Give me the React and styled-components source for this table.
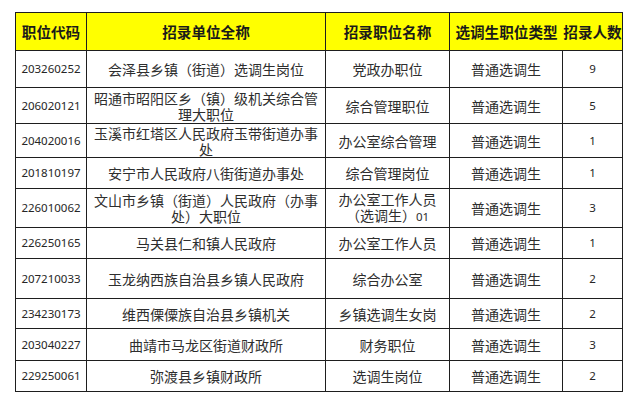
import React from "react";
import styled, { createGlobalStyle } from "styled-components";

const Global = createGlobalStyle`
  html, body { margin: 0; padding: 0; background: #ffffff; }
  body { font-family: "Noto Sans CJK SC", "Noto Sans", sans-serif; }
`;

const COLS = "71px 239px 124px 113px 60px";

const Page = styled.div`
  padding: 12px 0 0 15px;
  background: #fff;
  width: 640px;
  height: 401px;
  box-sizing: border-box;
  overflow: hidden;
`;

const Table = styled.div`
  display: flex;
  flex-direction: column;
  width: max-content;
  border-left: 1px solid #1e1e1e;
  border-top: 1px solid #1e1e1e;
`;

const Row = styled.div`
  display: grid;
  grid-template-columns: ${COLS};
  height: ${(p) => p.$h}px;
  background: ${(p) => (p.$head ? "#ffff00" : "#ffffff")};
`;

const Cell = styled.div`
  box-sizing: border-box;
  display: flex;
  align-items: center;
  justify-content: center;
  text-align: center;
  border-right: ${(p) => (p.$noRight ? "none" : "1px solid #1e1e1e")};
  border-bottom: 1px solid #1e1e1e;
  color: #2e2e2e;
  font-size: 14px;
  line-height: 16px;
  font-family: "Noto Sans CJK SC", sans-serif;
`;

const HeadCell = styled(Cell)`
  font-weight: 700;
  font-size: 14.6px;
  color: #1a1a1a;
  white-space: nowrap;
  padding-top: 1px;
  overflow: hidden;
`;

const CodeCell = styled(Cell)`
  font-family: "Noto Sans", "Noto Sans CJK SC", sans-serif;
  font-size: 11.5px;
  color: #262626;
`;

const NumCell = styled(CodeCell)``;

const Num = styled.span`
  font-family: "Noto Sans", sans-serif;
  font-size: 11.5px;
`;

const rows = [
  { h: 37, code: "203260252", unit: ["会泽县乡镇（街道）选调生岗位"], pos: ["党政办职位"], type: "普通选调生", n: "9" },
  { h: 36, code: "206020121", unit: ["昭通市昭阳区乡（镇）级机关综合管", "理大职位"], pos: ["综合管理职位"], type: "普通选调生", n: "5" },
  { h: 34, code: "204020016", unit: ["玉溪市红塔区人民政府玉带街道办事", "处"], pos: ["办公室综合管理"], type: "普通选调生", n: "1" },
  { h: 31, code: "201810197", unit: ["安宁市人民政府八街街道办事处"], pos: ["综合管理岗位"], type: "普通选调生", n: "1" },
  { h: 39, code: "226010062", unit: ["文山市乡镇（街道）人民政府（办事", "处）大职位"], pos: ["办公室工作人员", "（选调生）01"], type: "普通选调生", n: "3" },
  { h: 31, code: "226250165", unit: ["马关县仁和镇人民政府"], pos: ["办公室工作人员"], type: "普通选调生", n: "1" },
  { h: 40, code: "207210033", unit: ["玉龙纳西族自治县乡镇人民政府"], pos: ["综合办公室"], type: "普通选调生", n: "2" },
  { h: 30, code: "234230173", unit: ["维西傈僳族自治县乡镇机关"], pos: ["乡镇选调生女岗"], type: "普通选调生", n: "2" },
  { h: 32, code: "203040227", unit: ["曲靖市马龙区街道财政所"], pos: ["财务职位"], type: "普通选调生", n: "3" },
  { h: 31, code: "229250061", unit: ["弥渡县乡镇财政所"], pos: ["选调生岗位"], type: "普通选调生", n: "2" },
];

const renderLine = (line) => {
  const m = line.match(/^(.*?)(\d+)$/);
  if (m && m[1]) {
    return (
      <>
        {m[1]}
        <Num>{m[2]}</Num>
      </>
    );
  }
  return line;
};

const Lines = ({ lines }) =>
  lines.map((l, i) => (
    <React.Fragment key={i}>
      {i > 0 && <br />}
      {renderLine(l)}
    </React.Fragment>
  ));

export default function App() {
  return (
    <>
      <Global />
      <Page>
        <Table>
          <Row $head $h={38}>
            <HeadCell>职位代码</HeadCell>
            <HeadCell>招录单位全称</HeadCell>
            <HeadCell>招录职位名称</HeadCell>
            <HeadCell $noRight>选调生职位类型</HeadCell>
            <HeadCell>招录人数</HeadCell>
          </Row>
          {rows.map((r) => (
            <Row key={r.code} $h={r.h}>
              <CodeCell>{r.code}</CodeCell>
              <Cell>
                <span>
                  <Lines lines={r.unit} />
                </span>
              </Cell>
              <Cell>
                <span>
                  <Lines lines={r.pos} />
                </span>
              </Cell>
              <Cell>{r.type}</Cell>
              <NumCell>{r.n}</NumCell>
            </Row>
          ))}
        </Table>
      </Page>
    </>
  );
}
